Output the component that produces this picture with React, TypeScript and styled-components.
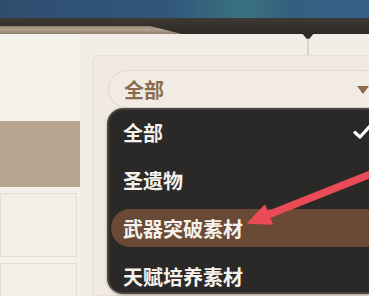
import React from 'react';
import styled, { createGlobalStyle } from 'styled-components';

const GlobalStyle = createGlobalStyle`
    html, body {
        margin: 0;
        padding: 0;
        width: 369px;
        height: 296px;
        overflow: hidden;
        background: #f2ede6;
    }
    body {
        font-family: "Noto Sans CJK SC", "Noto Sans", sans-serif;
    }
`;

const StyledPage = styled('div')`
    position: relative;
    width: 369px;
    height: 296px;
    display: grid;
    grid-template-rows: 18px 16px 1fr;
    overflow: hidden;
    background: #f2ede6;
`;

const StyledSky = styled('div')`
    background: linear-gradient(90deg, #2e4e6f 0%, #31567a 45%, #3a7280 66%, #34607e 78%, #36608a 100%);
`;

const StyledRim = styled('div')`
    position: relative;
    background-color: #34302b;
    background-image: linear-gradient(180deg, #3d3934 0%, #34302b 55%, #2c2925 100%);
`;

const StyledPageEdge = styled('div')`
    position: absolute;
    left: 0;
    bottom: 0;
    width: 182px;
    height: 8px;
    background: linear-gradient(180deg, #8f8170 0%, #b3a590 45%, #8a7c6a 100%);
    clip-path: polygon(0 0, 150px 0, 182px 100%, 0 100%);
`;

const StyledGutter = styled('svg')`
    position: absolute;
    left: 300px;
    top: 29px;
`;

const StyledBody = styled('div')`
    display: flex;
    gap: 12px;
    min-height: 0;
    overflow: hidden;
`;

const StyledSideColumn = styled('div')`
    width: 80px;
    flex-shrink: 0;
    display: flex;
    flex-direction: column;
    gap: 6px;
    padding-top: 87px;
    overflow: hidden;
    background: #f4f0ea;
`;

const StyledBanner = styled('div')`
    height: 66px;
    flex-shrink: 0;
    background: #b8a691;
`;

const StyledCard = styled('div')`
    width: 77px;
    height: 64px;
    flex-shrink: 0;
    box-sizing: border-box;
    border: 1px solid #e6ddd1;
    background: #f3eee8;
`;

const StyledPanel = styled('div')`
    position: relative;
    margin-top: 21px;
    width: 300px;
    flex-shrink: 0;
    padding: 14px 0 0 15px;
    box-sizing: border-box;
    border: 1px solid #e8e0d6;
    border-right: none;
    border-radius: 6px 0 0 0;
    background: #f0eae2;
`;

const StyledSelect = styled('div')`
    width: 276px;
    height: 38px;
    box-sizing: border-box;
    display: flex;
    align-items: center;
    justify-content: space-between;
    padding: 0 14px 0 15px;
    border: 1px solid #e2d8cb;
    border-radius: 19px;
    background: #f1ebe4;
    color: #8b6b4f;
    font-size: 20px;
    font-weight: 700;
`;

const StyledCaret = styled('span')`
    width: 0;
    height: 0;
    border-left: 6px solid transparent;
    border-right: 6px solid transparent;
    border-top: 8px solid #8b6b4f;
    margin-top: 2px;
`;

const StyledMenu = styled('div')`
    position: absolute;
    left: 14px;
    top: 52px;
    width: 280px;
    height: 186px;
    box-sizing: border-box;
    display: flex;
    flex-direction: column;
    gap: 10px;
    padding: 3px 2px;
    border: 2px solid #46423e;
    border-radius: 16px;
    background: #2a2928;
    box-shadow: 0 1px 3px rgba(40, 30, 20, 0.35);
`;

const StyledOption = styled('div')<{ $active?: boolean }>`
    height: 38px;
    flex-shrink: 0;
    display: flex;
    align-items: center;
    justify-content: space-between;
    padding: 0 12px;
    border-radius: 19px;
    background: ${({ $active }) => ($active ? '#6a4a35' : 'transparent')};
    color: #f5f2ed;
    font-size: 20px;
    font-weight: 700;
`;

const StyledPointer = styled('svg')`
    position: absolute;
    left: 0;
    top: 0;
    pointer-events: none;
`;

const options = ['全部', '圣遗物', '武器突破素材', '天赋培养素材'];

export default function App() {
    return (
        <>
            <GlobalStyle />
            <StyledPage>
                <StyledSky />
                <StyledRim>
                    <StyledPageEdge />
                </StyledRim>
                <StyledBody>
                    <StyledSideColumn>
                        <StyledBanner />
                        <StyledCard />
                        <StyledCard />
                    </StyledSideColumn>
                    <StyledPanel>
                        <StyledSelect>
                            <span>全部</span>
                            <StyledCaret />
                        </StyledSelect>
                        <StyledMenu>
                            {options.map((label, i) => (
                                <StyledOption key={label} $active={i === 2}>
                                    <span>{label}</span>
                                    {i === 0 && (
                                        <svg width="18" height="16" viewBox="0 0 18 16">
                                            <path d="M2 8.5 L7 13 L16.5 2.5" fill="none" stroke="#ffffff" strokeWidth="3.2" strokeLinecap="round" strokeLinejoin="round" />
                                        </svg>
                                    )}
                                </StyledOption>
                            ))}
                        </StyledMenu>
                    </StyledPanel>
                </StyledBody>
                <StyledGutter width="16" height="28" viewBox="0 0 16 28">
                    <path d="M1 3 L15 3 L9.2 10 L6.8 10 Z" fill="#2e2a26" />
                    <rect x="7.4" y="9" width="1.2" height="17" fill="#bdb2a4" opacity="0.7" />
                </StyledGutter>
                <StyledPointer width="369" height="296" viewBox="0 0 369 296">
                    <polygon
                        points="248,223 264.7,205.5 267.3,212 370.9,170.7 373.1,176.3 269.5,217.6 272.1,224.1"
                        fill="#ea4b56"
                        stroke="#ea4b56"
                        strokeWidth="1.5"
                        strokeLinejoin="round"
                    />
                </StyledPointer>
            </StyledPage>
        </>
    );
}
